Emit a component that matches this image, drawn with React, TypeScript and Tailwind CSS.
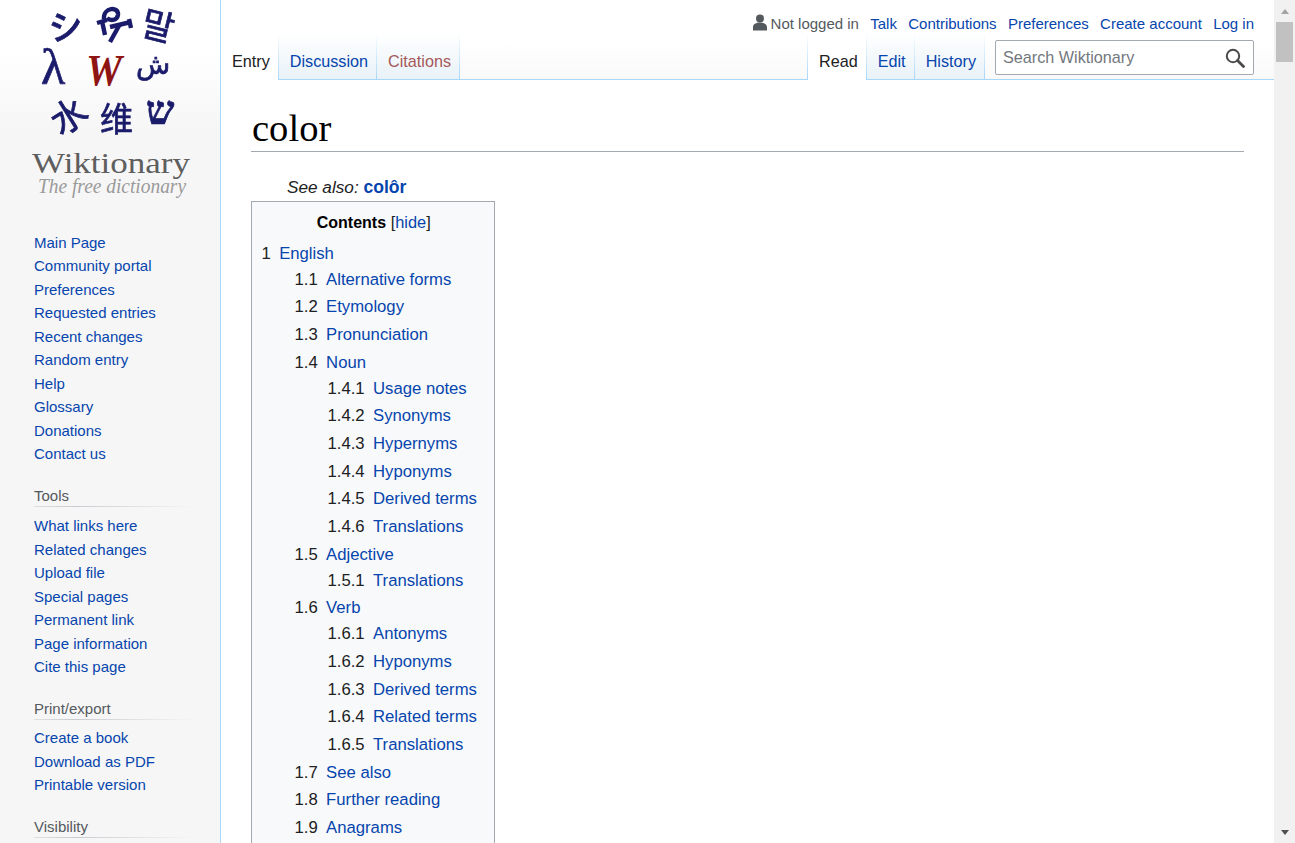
interface ITocItem {
  num: string;
  label: string;
  children?: ITocItem[];
}

const navMain = [
  "Main Page",
  "Community portal",
  "Preferences",
  "Requested entries",
  "Recent changes",
  "Random entry",
  "Help",
  "Glossary",
  "Donations",
  "Contact us",
];
const navTools = [
  "What links here",
  "Related changes",
  "Upload file",
  "Special pages",
  "Permanent link",
  "Page information",
  "Cite this page",
];
const navPrint = ["Create a book", "Download as PDF", "Printable version"];

const toc: ITocItem[] = [
  {
    num: "1",
    label: "English",
    children: [
      { num: "1.1", label: "Alternative forms" },
      { num: "1.2", label: "Etymology" },
      { num: "1.3", label: "Pronunciation" },
      {
        num: "1.4",
        label: "Noun",
        children: [
          { num: "1.4.1", label: "Usage notes" },
          { num: "1.4.2", label: "Synonyms" },
          { num: "1.4.3", label: "Hypernyms" },
          { num: "1.4.4", label: "Hyponyms" },
          { num: "1.4.5", label: "Derived terms" },
          { num: "1.4.6", label: "Translations" },
        ],
      },
      {
        num: "1.5",
        label: "Adjective",
        children: [{ num: "1.5.1", label: "Translations" }],
      },
      {
        num: "1.6",
        label: "Verb",
        children: [
          { num: "1.6.1", label: "Antonyms" },
          { num: "1.6.2", label: "Hyponyms" },
          { num: "1.6.3", label: "Derived terms" },
          { num: "1.6.4", label: "Related terms" },
          { num: "1.6.5", label: "Translations" },
        ],
      },
      { num: "1.7", label: "See also" },
      { num: "1.8", label: "Further reading" },
      { num: "1.9", label: "Anagrams" },
    ],
  },
];

function Logo() {
  return (
    <svg width="220" height="210" viewBox="0 0 220 210" className="block">
      <g fill="#1b1b6b" stroke="#1b1b6b" strokeWidth="0.7" style={{ filter: "blur(0.35px)" }}>
        <text x="49" y="39" fontSize="34" fontWeight="500" fontFamily="Noto Sans CJK JP" transform="rotate(-8 66 28)">シ</text>
        <g fill="none" strokeWidth="4.4">
          <path d="M97 23 L107 20" />
          <path d="M102 21 L105 35" />
          <path d="M104 19 C103 7 119 6 118 15 C117 21 110 21 107 18" />
          <path d="M110 27 L131 22" />
          <path d="M120 24 L110 42" />
          <path d="M129 19 L131 28" />
        </g>
        <text x="142" y="39" fontSize="35" fontFamily="Noto Sans CJK KR" transform="rotate(14 159 26)">말</text>
        <text x="41" y="84" fontSize="50" fontFamily="Liberation Serif">λ</text>
        <text x="136" y="74" fontSize="28" fontFamily="DejaVu Sans">ش</text>
        <text x="52" y="129" fontSize="36" fontFamily="Noto Sans CJK SC" transform="rotate(-32 70 118)">水</text>
        <text x="100" y="131" fontSize="33" fontFamily="Noto Sans CJK SC">维</text>
        <text x="146" y="124" fontSize="40" fontWeight="700" fontFamily="Liberation Serif">ש</text>
      </g>
      <text x="86" y="85" fontSize="44" fontWeight="700" fontStyle="italic" fontFamily="Liberation Serif" fill="#8f1414" textLength="36" lengthAdjust="spacingAndGlyphs">W</text>
      <text x="32" y="173" fontSize="30" fontFamily="Liberation Serif" fill="#5e5e5e" textLength="158" lengthAdjust="spacingAndGlyphs">Wiktionary</text>
      <text x="38" y="193" fontSize="20.5" fontStyle="italic" fontFamily="Liberation Serif" fill="#9a9a9a" textLength="148" lengthAdjust="spacingAndGlyphs">The free dictionary</text>
    </svg>
  );
}

function NavLinks({ items }: { items: string[] }) {
  return (
    <ul className="pl-[34px]">
      {items.map((item, index) => (
        <li key={index} className="h-[23.45px] leading-[23.45px] text-[15px] text-[#0645ad] whitespace-nowrap">
          {item}
        </li>
      ))}
    </ul>
  );
}

function NavHeading({ title }: { title: string }) {
  return (
    <div className="relative ml-[34px] h-[24px] leading-[24px] text-[15px] text-[#54595d]">
      {title}
      <div className="absolute left-0 bottom-[1px] h-px w-[160px] bg-gradient-to-r from-[#e0e0e0] via-[#c8ccd1] via-[25%] to-[#f6f6f6]" />
    </div>
  );
}

function TocList({ items, top }: { items: ITocItem[]; top?: boolean }) {
  return (
    <ul className={top ? "" : "ml-[33px]"}>
      {items.map((item) => (
        <li key={item.num} className="mb-[1.68px]">
          <div className="h-[26px] leading-[26px] whitespace-nowrap">
            <span className="pr-[8.4px] text-[#202122]">{item.num}</span>
            <span className="text-[#0645ad]">{item.label}</span>
          </div>
          {item.children && <TocList items={item.children} />}
        </li>
      ))}
    </ul>
  );
}

function TabSeparator() {
  return <div className="w-px h-[46px] shrink-0 bg-gradient-to-b from-white to-[#a7d7f9]" />;
}

function Tab({ label, selected, color }: { label: string; selected?: boolean; color?: string }) {
  return (
    <>
      <div
        className={`h-[46px] flex items-center pl-[11px] pr-[8px] text-[16.2px] ${
          selected
            ? "bg-white text-[#202122] relative top-[1px]"
            : "bg-gradient-to-b from-white to-[#e8f2f8] " + (color ?? "text-[#0645ad]")
        }`}
      >
        <span className={selected ? "relative top-[4px]" : "relative top-[5px]"}>{label}</span>
      </div>
      <TabSeparator />
    </>
  );
}

function UserIcon() {
  return (
    <svg width="16" height="17" viewBox="0 0 16 17" className="mr-[3px] mb-[4px]">
      <circle cx="8" cy="4.5" r="4" fill="#54595d" />
      <path d="M1 16.5 V13 C1 10 4 8.5 8 8.5 C12 8.5 15 10 15 13 V16.5 Z" fill="#54595d" />
    </svg>
  );
}

function SearchIcon() {
  return (
    <svg width="20" height="20" viewBox="0 0 20 20">
      <circle cx="8" cy="8" r="6.2" fill="none" stroke="#4a4a4a" strokeWidth="2" />
      <path d="M12.5 12.5 L18.5 18.5" stroke="#4a4a4a" strokeWidth="2.8" strokeLinecap="round" />
    </svg>
  );
}

export default function App() {
  return (
    <div className="h-[843px] w-[1295px] overflow-hidden flex font-['Liberation_Sans',Arial,sans-serif] bg-white">
      {/* sidebar */}
      <div className="w-[220px] shrink-0 h-full bg-[#f6f6f6] bg-gradient-to-b from-white from-[50px] to-[#f6f6f6] to-[130px]">
        <Logo />
        <div className="mt-[21px]">
          <NavLinks items={navMain} />
        </div>
        <div className="mt-[18.5px]">
          <NavHeading title="Tools" />
          <div className="mt-[6.5px]">
            <NavLinks items={navTools} />
          </div>
        </div>
        <div className="mt-[19px]">
          <NavHeading title="Print/export" />
          <div className="mt-[5px]">
            <NavLinks items={navPrint} />
          </div>
        </div>
        <div className="mt-[18px]">
          <NavHeading title="Visibility" />
        </div>
      </div>

      {/* main column */}
      <div className="w-[1054px] shrink-0 h-full flex flex-col">
        {/* top bar */}
        <div className="h-[80px] shrink-0 flex flex-col bg-gradient-to-b from-white from-[50%] to-[#f9f9f9] border-l border-[#a7d7f9] border-b border-b-[#a7d7f9]">
          <div className="h-[33px] shrink-0 pt-[15px] pr-[20px] flex justify-end items-center gap-[11.3px] text-[15px] text-[#0645ad] whitespace-nowrap">
            <span className="flex items-center text-[#54595d]">
              <UserIcon />
              Not logged in
            </span>
            <span>Talk</span>
            <span>Contributions</span>
            <span>Preferences</span>
            <span>Create account</span>
            <span>Log in</span>
          </div>
          <div className="flex-1 flex justify-between items-end">
            <div className="flex">
              <Tab label="Entry" selected />
              <Tab label="Discussion" />
              <Tab label="Citations" color="text-[#a55858]" />
            </div>
            <div className="flex items-end">
              <TabSeparator />
              <Tab label="Read" selected />
              <Tab label="Edit" />
              <Tab label="History" />
              <div className="w-[259px] h-[35px] mb-[4px] ml-[10px] mr-[20px] bg-white border border-[#a2a9b1] rounded-[2px] flex items-center justify-between pl-[7px] pr-[8px]">
                <span className="text-[16.2px] text-[#72777d]">Search Wiktionary</span>
                <SearchIcon />
              </div>
            </div>
          </div>
        </div>

        {/* article */}
        <div className="flex-1 min-h-0 border-l border-[#a7d7f9] pl-[30px] pr-[30px] text-[16.7px] text-[#202122]">
          <h1 className="mt-[26px] h-[46px] leading-[44px] text-[38.6px] font-['Liberation_Serif',Georgia,serif] text-black border-b border-[#a2a9b1]">
            <span className="ml-[1px]">color</span>
          </h1>
          <div className="mt-[22px] pl-[36px] h-[27px] leading-[26px] italic text-[17.2px] whitespace-nowrap">
            See also: <b className="not-italic text-[17.6px] text-[#0645ad]">colôr</b>
          </div>
          <div className="w-[244px] border border-[#a2a9b1] bg-[#f8f9fa] pl-[9.5px] pt-[7px]">
            <div className="h-[26px] leading-[26px] text-center text-[16.4px] text-black pr-[8px]">
              <b className="text-[16px]">Contents</b>{" "}
              <span className="text-[#202122]">
                [<span className="text-[#0645ad]">hide</span>]
              </span>
            </div>
            <div className="mt-[5.7px]">
              <TocList items={toc} top />
            </div>
          </div>
        </div>
      </div>

      {/* scrollbar */}
      <div className="w-[21px] shrink-0 h-full bg-[#f1f1f1] flex flex-col items-center relative">
        <div className="mt-[9px] w-0 h-0 border-x-[4.5px] border-x-transparent border-b-[5px] border-b-[#a3a3a3]" />
        <div className="mt-[8px] h-[40px] w-[17px] bg-[#c1c1c1]" />
        <div className="absolute bottom-[8px] w-0 h-0 border-x-[4.5px] border-x-transparent border-t-[5px] border-t-[#505050]" />
      </div>
    </div>
  );
}
